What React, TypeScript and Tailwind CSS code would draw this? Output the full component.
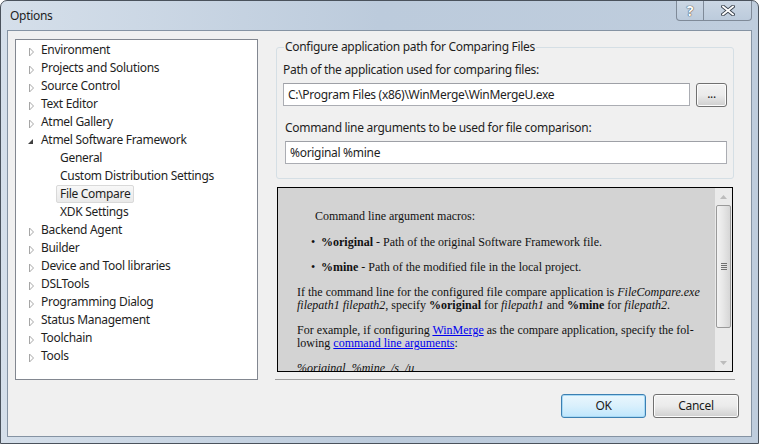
import React from "react";

type Node = { label: string; level: 0 | 1; state?: "closed" | "open"; selected?: boolean };

const tree: Node[] = [
  { label: "Environment", level: 0, state: "closed" },
  { label: "Projects and Solutions", level: 0, state: "closed" },
  { label: "Source Control", level: 0, state: "closed" },
  { label: "Text Editor", level: 0, state: "closed" },
  { label: "Atmel Gallery", level: 0, state: "closed" },
  { label: "Atmel Software Framework", level: 0, state: "open" },
  { label: "General", level: 1 },
  { label: "Custom Distribution Settings", level: 1 },
  { label: "File Compare", level: 1, selected: true },
  { label: "XDK Settings", level: 1 },
  { label: "Backend Agent", level: 0, state: "closed" },
  { label: "Builder", level: 0, state: "closed" },
  { label: "Device and Tool libraries", level: 0, state: "closed" },
  { label: "DSLTools", level: 0, state: "closed" },
  { label: "Programming Dialog", level: 0, state: "closed" },
  { label: "Status Management", level: 0, state: "closed" },
  { label: "Toolchain", level: 0, state: "closed" },
  { label: "Tools", level: 0, state: "closed" },
];

function Arrow({ state }: { state?: "closed" | "open" }) {
  if (state === "closed") {
    return (
      <svg width="7" height="10" viewBox="0 0 7 10" className="mt-[3px]">
        <polygon points="1.5,1 5.5,5 1.5,9" fill="#fff" stroke="#a6a6a6" strokeWidth="1" />
      </svg>
    );
  }
  if (state === "open") {
    return (
      <svg width="7" height="10" viewBox="0 0 7 10" className="mt-[1px] -ml-[1px]">
        <polygon points="6,3 6,8 1,8" fill="#404040" />
      </svg>
    );
  }
  return null;
}

function TreeRow({ node }: { node: Node }) {
  return (
    <div className="flex h-[18px] items-center">
      <div className="flex w-[25px] shrink-0 items-center pl-[12px]">
        {node.level === 0 && <Arrow state={node.state} />}
      </div>
      {node.level === 1 ? (
        <span
          className={
            "ml-[15px] h-[18px] rounded-[2px] border px-[3px] leading-[16px] " +
            (node.selected
              ? "border-[#d9d9d9] bg-gradient-to-b from-[#f8f8f8] to-[#e9e9e9]"
              : "border-transparent")
          }
        >
          {node.label}
        </span>
      ) : (
        <span className="leading-[18px]">{node.label}</span>
      )}
    </div>
  );
}

function ScrollBar() {
  return (
    <div className="flex w-[17px] shrink-0 flex-col bg-[#eaeaea]">
      <div className="flex h-[17px] items-center justify-center">
        <svg width="7" height="4" viewBox="0 0 7 4">
          <polygon points="0,4 3.5,0 7,4" fill="#bcbcbc" />
        </svg>
      </div>
      <div className="mx-[1px] flex h-[123px] items-center justify-center rounded-[2px] border border-[#9a9a9a] bg-gradient-to-r from-[#f3f3f3] via-[#e6e6e6] to-[#d6d6d6]">
        <div className="flex flex-col gap-[1px]">
          <div className="h-[1px] w-[6px] bg-[#707070]" />
          <div className="h-[1px] w-[6px] bg-[#707070]" />
          <div className="h-[1px] w-[6px] bg-[#707070]" />
          <div className="h-[1px] w-[6px] bg-[#707070]" />
        </div>
      </div>
      <div className="flex-1" />
      <div className="flex h-[17px] items-center justify-center">
        <svg width="7" height="4" viewBox="0 0 7 4">
          <polygon points="0,0 3.5,4 7,0" fill="#bcbcbc" />
        </svg>
      </div>
    </div>
  );
}

function HelpPanel() {
  return (
    <div className="ml-[3px] mt-[8px] flex h-[185px] w-[456px] border border-black bg-[#d3d3d3]">
      <div className="flex-1 overflow-hidden pl-[19px] pr-[8px] pt-[22px] font-['Liberation_Serif',serif] text-[12px] leading-[13px] tracking-normal text-[#111]">
        <p className="ml-[18px]">Command line argument macros:</p>
        <ul className="mt-[13px] flex flex-col gap-[12px] pl-[14px]">
          <li className="flex">
            <span className="w-[10px]">•</span>
            <span>
              <b>%original</b> - Path of the original Software Framework file.
            </span>
          </li>
          <li className="flex">
            <span className="w-[10px]">•</span>
            <span>
              <b>%mine</b> - Path of the modified file in the local project.
            </span>
          </li>
        </ul>
        <p className="mt-[12px]">
          If the command line for the configured file compare application is <i>FileCompare.exe</i>{" "}
          <i>filepath1 filepath2</i>, specify <b>%original</b> for <i>filepath1</i> and <b>%mine</b> for{" "}
          <i>filepath2</i>.
        </p>
        <p className="mt-[12px]">
          For example, if configuring{" "}
          <span className="text-[#0000ee] underline">WinMerge</span> as the compare application, specify the fol-
          lowing <span className="text-[#0000ee] underline">command line arguments</span>:
        </p>
        <p className="mt-[12px] italic">%original&nbsp; %mine&nbsp; /s&nbsp; /u</p>
      </div>
      <ScrollBar />
    </div>
  );
}

function WinButton({ children, primary, className = "" }: { children: React.ReactNode; primary?: boolean; className?: string }) {
  return (
    <button
      className={
        "flex items-center justify-center rounded-[3px] border text-[12px] text-[#1a1a1a] " +
        (primary
          ? "border-[#3c7fb1] bg-gradient-to-b from-[#eaf6fd] via-[#d9f0fc] to-[#bee6fd] shadow-[inset_0_0_0_1px_#a7d9f5]"
          : "border-[#707070] bg-gradient-to-b from-[#f2f2f2] via-[#ebebeb] to-[#cfcfcf] shadow-[inset_0_0_0_1px_#fcfcfc]") +
        " " +
        className
      }
    >
      {children}
    </button>
  );
}

export default function App() {
  return (
    <div className="h-[444px] w-[759px] overflow-hidden bg-white font-['Noto_Sans',sans-serif] text-[12px] tracking-[-0.3px] text-[#1e1e1e]">
      <div className="flex h-full w-full flex-col rounded-t-[7px] border border-[#4a525c] bg-gradient-to-r from-[#d5dfea] via-[#bccbdc] to-[#bfcddd]">
        <div className="flex h-[29px] shrink-0 items-start">
          <div className="pl-[9px] pt-[6px] text-[12px] text-[#1e1e1e]">Options</div>
          <div className="flex-1" />
          <div className="mr-[6px] flex">
            <div className="flex h-[20px] w-[28px] items-center justify-center rounded-bl-[4px] border border-t-0 border-[#7f8a98] bg-gradient-to-b from-[#cbd7e4] to-[#bccbdc] text-[14px] font-bold leading-none text-white [text-shadow:0_0_1px_#2a323c,0_0_1px_#2a323c]">
              ?
            </div>
            <div className="flex h-[20px] w-[48px] items-center justify-center rounded-br-[4px] border border-l-0 border-t-0 border-[#7f8a98] bg-gradient-to-b from-[#cbd7e4] to-[#bccbdc]">
              <svg width="14" height="11" viewBox="0 0 14 11">
                <path d="M2 1.5 L12 9.5 M12 1.5 L2 9.5" stroke="#3a434e" strokeWidth="3.6" strokeLinecap="square" />
                <path d="M2 1.5 L12 9.5 M12 1.5 L2 9.5" stroke="#fff" strokeWidth="1.8" strokeLinecap="square" />
              </svg>
            </div>
          </div>
        </div>
        <div className="mx-[6px] mb-[6px] flex flex-1 flex-col border border-[#8593a3] bg-[#f0f0f0]">
          <div className="flex pl-[7px] pt-[8px]">
            <div className="h-[341px] w-[243px] shrink-0 border border-[#828790] bg-white pt-[1px]">
              {tree.map((n) => (
                <TreeRow key={n.label} node={n} />
              ))}
            </div>
            <div className="ml-[16px] flex w-[461px] flex-col">
              <fieldset className="ml-[2px] w-[458px] rounded-[3px] border border-[#d5dfe5] px-[6px] pb-[14px]">
                <legend className="ml-[1px] px-[1px] leading-[16px]">Configure application path for Comparing Files</legend>
                <div className="pt-[7px] leading-[16px]">Path of the application used for comparing files:</div>
                <div className="mt-[5px] flex items-start">
                  <div className="flex h-[23px] w-[407px] items-center border border-[#abadb3] border-t-[#9ea0a6] bg-white pl-[4px]">
                    C:\Program Files (x86)\WinMerge\WinMergeU.exe
                  </div>
                  <WinButton className="ml-[6px] h-[24px] w-[31px] pb-[2px] text-[9px]">...</WinButton>
                </div>
                <div className="ml-[2px] mt-[13px] leading-[16px]">Command line arguments to be used for file comparison:</div>
                <div className="ml-[2px] mt-[5px] flex h-[23px] w-[442px] items-center border border-[#abadb3] border-t-[#9ea0a6] bg-white pl-[4px]">
                  %original %mine
                </div>
              </fieldset>
              <HelpPanel />
              <div className="ml-[1px] mt-[7px] h-[2px] w-[460px] border-t border-[#a0a0a0] border-b-white" />
            </div>
          </div>
          <div className="mt-[13px] flex justify-end gap-[7px] pr-[12px]">
            <WinButton primary className="h-[24px] w-[85px]">OK</WinButton>
            <WinButton className="h-[24px] w-[86px]">Cancel</WinButton>
          </div>
        </div>
      </div>
    </div>
  );
}
